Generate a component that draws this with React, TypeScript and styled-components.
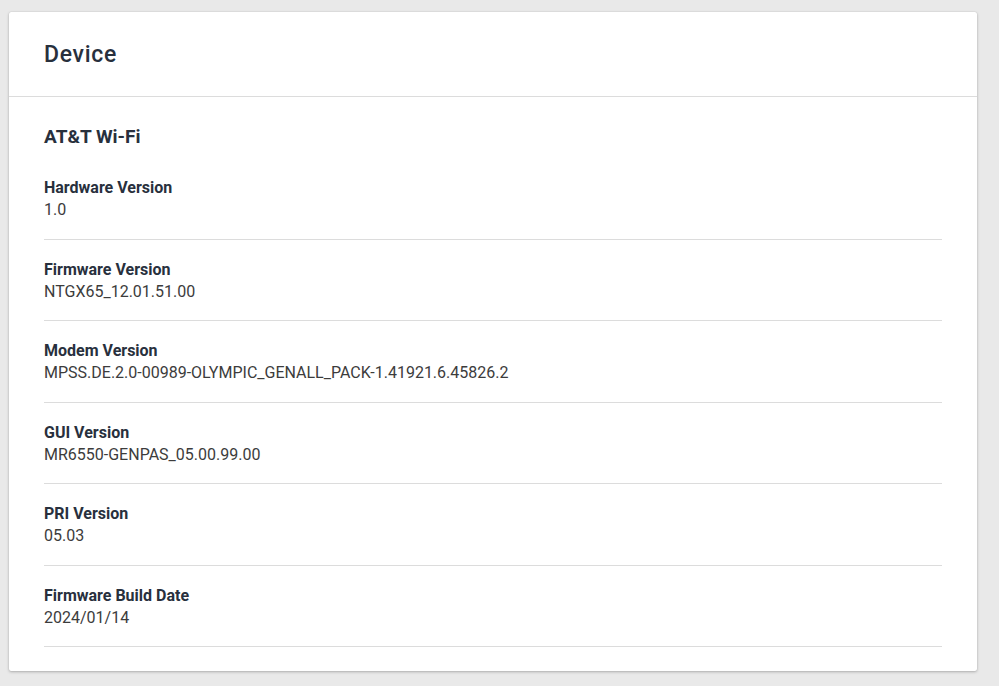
import React from 'react';
import styled, { createGlobalStyle } from 'styled-components';

const GlobalStyle = createGlobalStyle`
  html, body {
    margin: 0;
    padding: 0;
    background: #e9e9e9;
    font-family: Roboto, "Liberation Sans", Arial, sans-serif;
  }
`;

const Page = styled.div`
  width: 999px;
  height: 686px;
  padding: 12px 22px 0 9px;
  box-sizing: border-box;
  overflow: hidden;
`;

const Card = styled.div`
  background: #fff;
  border-radius: 2px;
  box-shadow: 0 1px 3px rgba(0, 0, 0, 0.25), 0 0 1px rgba(0, 0, 0, 0.2);
  padding-bottom: 24px;
`;

const CardHeader = styled.div`
  height: 84px;
  display: flex;
  align-items: center;
  padding: 0 35px;
  border-bottom: 1px solid #dcdcdc;
`;

const Title = styled.h1`
  margin: 0;
  font-size: 23px;
  font-weight: 500;
  letter-spacing: 0.7px;
  color: #28303d;
`;

const Body = styled.div`
  padding: 28px 35px 0;
`;

const SectionTitle = styled.h2`
  margin: 0 0 9px;
  font-size: 19px;
  line-height: 24px;
  font-weight: 700;
  color: #28303d;
`;

const Row = styled.div`
  display: flex;
  flex-direction: column;
  padding: 18px 0 17.5px;
  border-bottom: 1px solid #dcdcdc;
`;

const Label = styled.div`
  font-size: 16px;
  line-height: 23px;
  font-weight: 700;
  color: #28303d;
`;

const Value = styled.div`
  font-size: 16px;
  line-height: 22px;
  color: #3c3c3c;
`;

const rows = [
  { label: 'Hardware Version', value: '1.0' },
  { label: 'Firmware Version', value: 'NTGX65_12.01.51.00' },
  { label: 'Modem Version', value: 'MPSS.DE.2.0-00989-OLYMPIC_GENALL_PACK-1.41921.6.45826.2' },
  { label: 'GUI Version', value: 'MR6550-GENPAS_05.00.99.00' },
  { label: 'PRI Version', value: '05.03' },
  { label: 'Firmware Build Date', value: '2024/01/14' },
];

const App: React.FC = () => {
  return (
    <>
      <GlobalStyle />
      <Page>
        <Card>
          <CardHeader>
            <Title>Device</Title>
          </CardHeader>
          <Body>
            <SectionTitle>AT&amp;T Wi-Fi</SectionTitle>
            {rows.map((r) => (
              <Row key={r.label}>
                <Label>{r.label}</Label>
                <Value>{r.value}</Value>
              </Row>
            ))}
          </Body>
        </Card>
      </Page>
    </>
  );
};

export default App;
